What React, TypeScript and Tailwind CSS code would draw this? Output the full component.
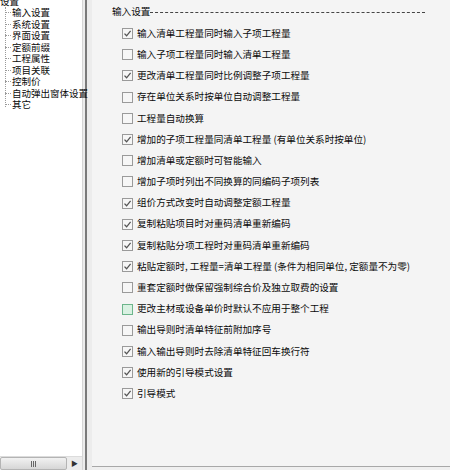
import type { ReactNode } from 'react'

const TREE = ['输入设置', '系统设置', '界面设置', '定额前缀', '工程属性', '项目关联', '控制价', '自动弹出窗体设置', '其它']

const OPTIONS: { label: string; checked: boolean; hover?: boolean }[] = [
  { label: '输入清单工程量同时输入子项工程量', checked: true },
  { label: '输入子项工程量同时输入清单工程量', checked: false },
  { label: '更改清单工程量同时比例调整子项工程量', checked: true },
  { label: '存在单位关系时按单位自动调整工程量', checked: false },
  { label: '工程量自动换算', checked: false },
  { label: '增加的子项工程量同清单工程量 (有单位关系时按单位)', checked: true },
  { label: '增加清单或定额时可智能输入', checked: false },
  { label: '增加子项时列出不同换算的同编码子项列表', checked: false },
  { label: '组价方式改变时自动调整定额工程量', checked: true },
  { label: '复制粘贴项目时对重码清单重新编码', checked: true },
  { label: '复制粘贴分项工程时对重码清单重新编码', checked: true },
  { label: '粘贴定额时, 工程量=清单工程量 (条件为相同单位, 定额量不为零)', checked: true },
  { label: '重套定额时做保留强制综合价及独立取费的设置', checked: false },
  { label: '更改主材或设备单价时默认不应用于整个工程', checked: false, hover: true },
  { label: '输出导则时清单特征前附加序号', checked: false },
  { label: '输入输出导则时去除清单特征回车换行符', checked: true },
  { label: '使用新的引导模式设置', checked: true },
  { label: '引导模式', checked: true },
]

const FONT = "font-['Noto_Sans_CJK_SC','Noto_Sans',sans-serif]"

function CheckBox({ checked, hover }: { checked: boolean; hover?: boolean }) {
  return (
    <span
      className={
        'flex h-[11px] w-[11px] shrink-0 items-center justify-center border ' +
        (hover ? 'border-[#6cb58b] bg-[#d9f1e2]' : 'border-[#9a9a9a] bg-[#f6f6f6]')
      }
    >
      {checked && (
        <svg width="9" height="9" viewBox="0 0 9 9">
          <path d="M1.5 4.6 L3.6 6.8 L7.6 1.8" fill="none" stroke="#555" strokeWidth="1.3" />
        </svg>
      )}
    </span>
  )
}

function TreeItem({ children }: { children: ReactNode }) {
  return (
    <div className="flex h-[11.5px] items-center">
      <span className="ml-[5px] w-[6px] shrink-0 border-t border-dotted border-[#9a9a9a]" />
      <span className="ml-[1px] shrink-0 whitespace-nowrap leading-none">{children}</span>
    </div>
  )
}

export default function App() {
  return (
    <div className={`flex h-[470px] w-[450px] overflow-hidden bg-[#efefef] text-[#0a0a0a] ${FONT}`}>
      <div className="z-10 flex w-[83px] shrink-0 flex-col border-r border-[#d6d6d6] text-[9.5px]">
        <div className="relative flex-1 bg-white">
          <div className="-mt-[4px] flex h-[11px] items-center whitespace-nowrap leading-none">设置</div>
          <div className="relative">
            <span className="absolute left-[5px] top-0 h-[100px] border-l border-dotted border-[#9a9a9a]" />
            {TREE.map((t) => (
              <TreeItem key={t}>{t}</TreeItem>
            ))}
          </div>
        </div>
        <div className="flex h-[14px] border-t border-[#dcdcdc] bg-[#ececec]">
          <div className="flex w-[67px] items-center justify-center rounded-[2px] border border-[#b4b4b4] bg-gradient-to-b from-[#f2f2f2] to-[#d6d6d6]">
            <span className="flex gap-[1px]">
              <span className="h-[6px] w-px bg-[#666]" />
              <span className="h-[6px] w-px bg-[#666]" />
              <span className="h-[6px] w-px bg-[#666]" />
            </span>
          </div>
          <div className="flex flex-1 items-center justify-center text-[7px] text-[#333]">▶</div>
        </div>
      </div>
      <div className="flex w-[9px] shrink-0 bg-[#ececec]">
        <span className="ml-[2px] w-[2px] bg-[#7a7a7a]" />
      </div>
      <div className="mb-[3px] flex flex-1 flex-col border-b border-[#a8a8a8] bg-[#f4f4f4] pl-[20px] text-[9.6px]">
        <div className="flex h-[23px] items-center">
          <span className="whitespace-nowrap leading-none">输入设置</span>
          <span className="mr-[25px] mt-[2px] flex-1 border-t border-dashed border-[#444]" />
        </div>
        <div className="flex flex-col pl-[10px]">
          {OPTIONS.map((o) => (
            <div key={o.label} className="flex h-[21.2px] items-center gap-[4px]">
              <CheckBox checked={o.checked} hover={o.hover} />
              <span className="whitespace-nowrap leading-none">{o.label}</span>
            </div>
          ))}
        </div>
      </div>
    </div>
  )
}
